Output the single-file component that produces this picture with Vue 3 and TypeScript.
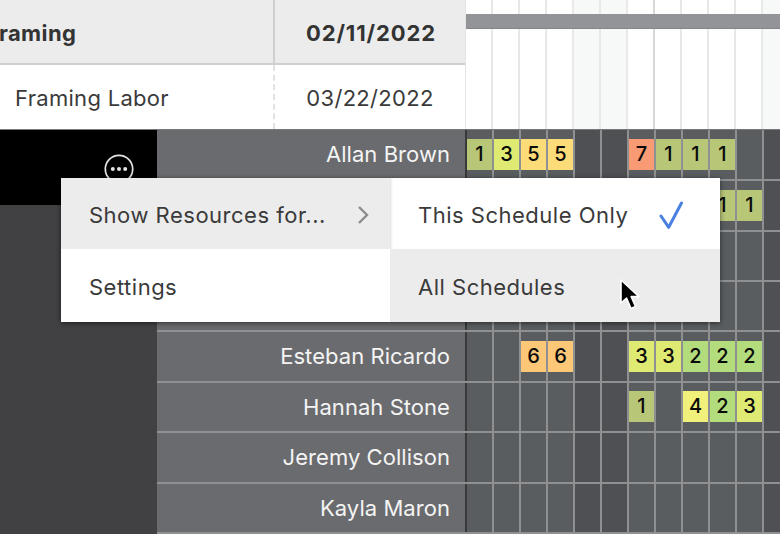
<script setup lang="ts">
interface Cell { col: number; value: number }
interface Resource { name: string; cells: Cell[] }

const columns = Array.from({ length: 12 }, (_, i) => i)
const weekendColumns = [4, 5, 11]

const run = (start: number, values: number[]): Cell[] =>
  values.map((value, i) => ({ col: start + i, value }))

const resources: Resource[] = [
  { name: 'Allan Brown', cells: [...run(0, [1, 3, 5, 5]), ...run(6, [7, 1, 1, 1])] },
  { name: '', cells: run(9, [1, 1]) },
  { name: '', cells: [] },
  { name: '', cells: [] },
  { name: 'Esteban Ricardo', cells: [...run(2, [6, 6]), ...run(6, [3, 3, 2, 2, 2])] },
  { name: 'Hannah Stone', cells: [...run(6, [1]), ...run(8, [4, 2, 3])] },
  { name: 'Jeremy Collison', cells: [] },
  { name: 'Kayla Maron', cells: [] },
]

const cellAt = (r: Resource, col: number) => r.cells.find((c) => c.col === col)
</script>

<template>
  <div class="page">
    <section class="top">
      <div class="table">
        <div class="th th-name"><span class="clipped">Framing</span></div>
        <div class="th th-date">02/11/2022</div>
        <div class="td td-name">Framing Labor</div>
        <div class="td td-date">03/22/2022</div>
      </div>
      <div class="timeline">
        <div class="timeline-cols">
          <div
            v-for="c in columns"
            :key="c"
            class="tcol"
            :class="{ weekend: weekendColumns.includes(c), strong: c === 6 }"
          ></div>
        </div>
        <div class="bar"></div>
      </div>
    </section>

    <section class="bottom">
      <aside class="side">
        <div class="side-head">
          <svg class="more" viewBox="0 0 30 30" width="30" height="30">
            <circle cx="15" cy="15" r="13.7" fill="none" stroke="#e4e4e4" stroke-width="1.7" />
            <circle cx="8.8" cy="15" r="2" fill="#e4e4e4" />
            <circle cx="15" cy="15" r="2" fill="#e4e4e4" />
            <circle cx="21.2" cy="15" r="2" fill="#e4e4e4" />
          </svg>
        </div>
      </aside>
      <div class="rows">
        <div v-for="(r, i) in resources" :key="i" class="row">
          <div class="name">{{ r.name }}</div>
          <div class="cells">
            <div
              v-for="c in columns"
              :key="c"
              class="slot"
              :class="{ weekend: weekendColumns.includes(c) }"
            >
              <div v-if="cellAt(r, c)" class="chip" :class="'v' + cellAt(r, c)!.value">
                {{ cellAt(r, c)!.value }}
              </div>
            </div>
          </div>
        </div>
      </div>
    </section>

    <div class="menu">
      <div class="menu-col menu-left">
        <div class="item active">
          <span>Show Resources for...</span>
          <svg class="chev" viewBox="0 0 12 20" width="12" height="20">
            <path d="M2 2 L10 10 L2 18" fill="none" stroke="#8c8c8c" stroke-width="2.4" />
          </svg>
        </div>
        <div class="item">Settings</div>
      </div>
      <div class="menu-col menu-right">
        <div class="item">
          <span>This Schedule Only</span>
          <svg class="check" viewBox="0 0 24 28" width="24" height="28">
            <path d="M2 15 L9.7 26.3 L22.5 2" fill="none" stroke="#4a80e0" stroke-width="3" stroke-linecap="round" stroke-linejoin="round" />
          </svg>
        </div>
        <div class="item active">All Schedules</div>
      </div>
    </div>

    <svg class="cursor" viewBox="0 0 24 36" width="24" height="36">
      <path
        d="M2 2 L2 25 L7.6 20.2 L12 30.5 L16.5 28.5 L12.2 18.6 L20 18.6 Z"
        fill="#000"
        stroke="#fff"
        stroke-width="1.6"
        stroke-linejoin="round"
      />
    </svg>
  </div>
</template>

<style>
html, body { margin: 0; background: #5a5d60; }
</style>

<style scoped>
.page {
  position: relative;
  width: 780px;
  height: 534px;
  overflow: hidden;
  font-family: Inter, "Liberation Sans", sans-serif;
  font-size: 22px;
  background: #5a5d60;
}
.top {
  display: flex;
  height: 130px;
  box-sizing: border-box;
  background: #fff;
  border-bottom: 1px solid #77787a;
}
.table {
  flex: 0 0 465px;
  display: grid;
  grid-template-columns: 275px 190px;
  grid-template-rows: 65px 64px;
  color: #333;
  border-right: 1px solid #d2d2d2;
  box-sizing: border-box;
}
.th {
  display: flex;
  align-items: center;
  padding-top: 2px;
  background: #ececec;
  border-bottom: 2px solid #cfcfcf;
  font-weight: 700;
  letter-spacing: 0.9px;
  box-sizing: border-box;
}
.th-name { overflow: hidden; border-right: 2px solid #cfcfcf; }
.clipped { margin-left: -14px; letter-spacing: 0.4px; }
.th-date { justify-content: center; padding-left: 2px; }
.td-date { justify-content: center; }
.td {
  display: flex;
  align-items: center;
  padding-top: 2px;
  box-sizing: border-box;
  font-weight: 400;
  color: #3a3a3a;
  letter-spacing: 0.3px;
}
.td-name { padding-left: 15px; border-right: 2px dashed #e2e2e2; }
.timeline { position: relative; flex: 1; min-width: 0; border-left: 1px solid #e4e4e4; margin-left: -1px; }
.timeline-cols { display: grid; grid-template-columns: repeat(12, 27px); height: 100%; }
.tcol { border-right: 2px solid #e8e8e8; box-sizing: border-box; }
.tcol.weekend { background: #f7f9f8; }
.tcol.strong { border-right-color: #d8d8d8; }
.bar {
  position: absolute;
  left: 0;
  right: 0;
  top: 14px;
  height: 15px;
  background: #939497;
  border-bottom: 1px solid #85868a;
  box-sizing: border-box;
}
.bottom {
  display: flex;
  height: 404px;
}
.side {
  flex: 0 0 157px;
  background: #414143;
}
.side-head {
  display: flex;
  justify-content: flex-end;
  height: 75px;
  padding: 24px 23px 0 0;
  box-sizing: border-box;
  background: #000;
}
.rows { flex: 1; min-width: 0; }
.row {
  display: flex;
  height: 50.4px;
  box-sizing: border-box;
  border-bottom: 2px solid #8f9091;
}
.row:first-child { height: 51.2px; }
.name {
  flex: 0 0 308px;
  box-sizing: border-box;
  padding-right: 15px;
  line-height: 48px;
  text-align: right;
  color: #f4f4f4;
  background: #6a6b6e;
  letter-spacing: 0.05px;
}
.cells {
  display: grid;
  grid-template-columns: repeat(12, 27px);
  flex: 1;
  min-width: 0;
  overflow: hidden;
  border-left: 2px solid #38393b;
}
.slot {
  display: flex;
  align-items: center;
  justify-content: center;
  border-right: 2px solid #8f9091;
  box-sizing: border-box;
  background: #5a5d60;
}
.slot.weekend { background: #4f5053; }
.chip {
  width: 25px;
  height: 31px;
  line-height: 31px;
  text-align: center;
  font-size: 20px;
  font-weight: 500;
  color: #0a0a0a;
}
.v1 { background: #b8c678; }
.v2 { background: #b3dc7c; }
.v3 { background: #dfea72; }
.v4 { background: #f0f07a; }
.v5 { background: #fbdc78; }
.v6 { background: #fcc878; }
.v7 { background: #f89a74; }
.menu {
  position: absolute;
  left: 61px;
  top: 178px;
  width: 659px;
  height: 144px;
  display: grid;
  grid-template-columns: 329px 330px;
  background: #fff;
  box-shadow: 0 1px 5px rgba(0, 0, 0, 0.55);
  color: #3a3a3a;
  letter-spacing: 0.5px;
}
.menu-col { display: grid; grid-template-rows: 71px 73px; }
.menu-right { box-shadow: inset 3px 0 3px -2px rgba(0, 0, 0, 0.14); }
.item {
  display: flex;
  align-items: center;
  justify-content: space-between;
  padding: 2px 0 0 28px;
  box-sizing: border-box;
}
.active { background: #ececec; }
.chev { margin-right: 21px; }
.check { margin-right: 37px; }
.cursor {
  position: absolute;
  left: 619px;
  top: 278px;
}
</style>
